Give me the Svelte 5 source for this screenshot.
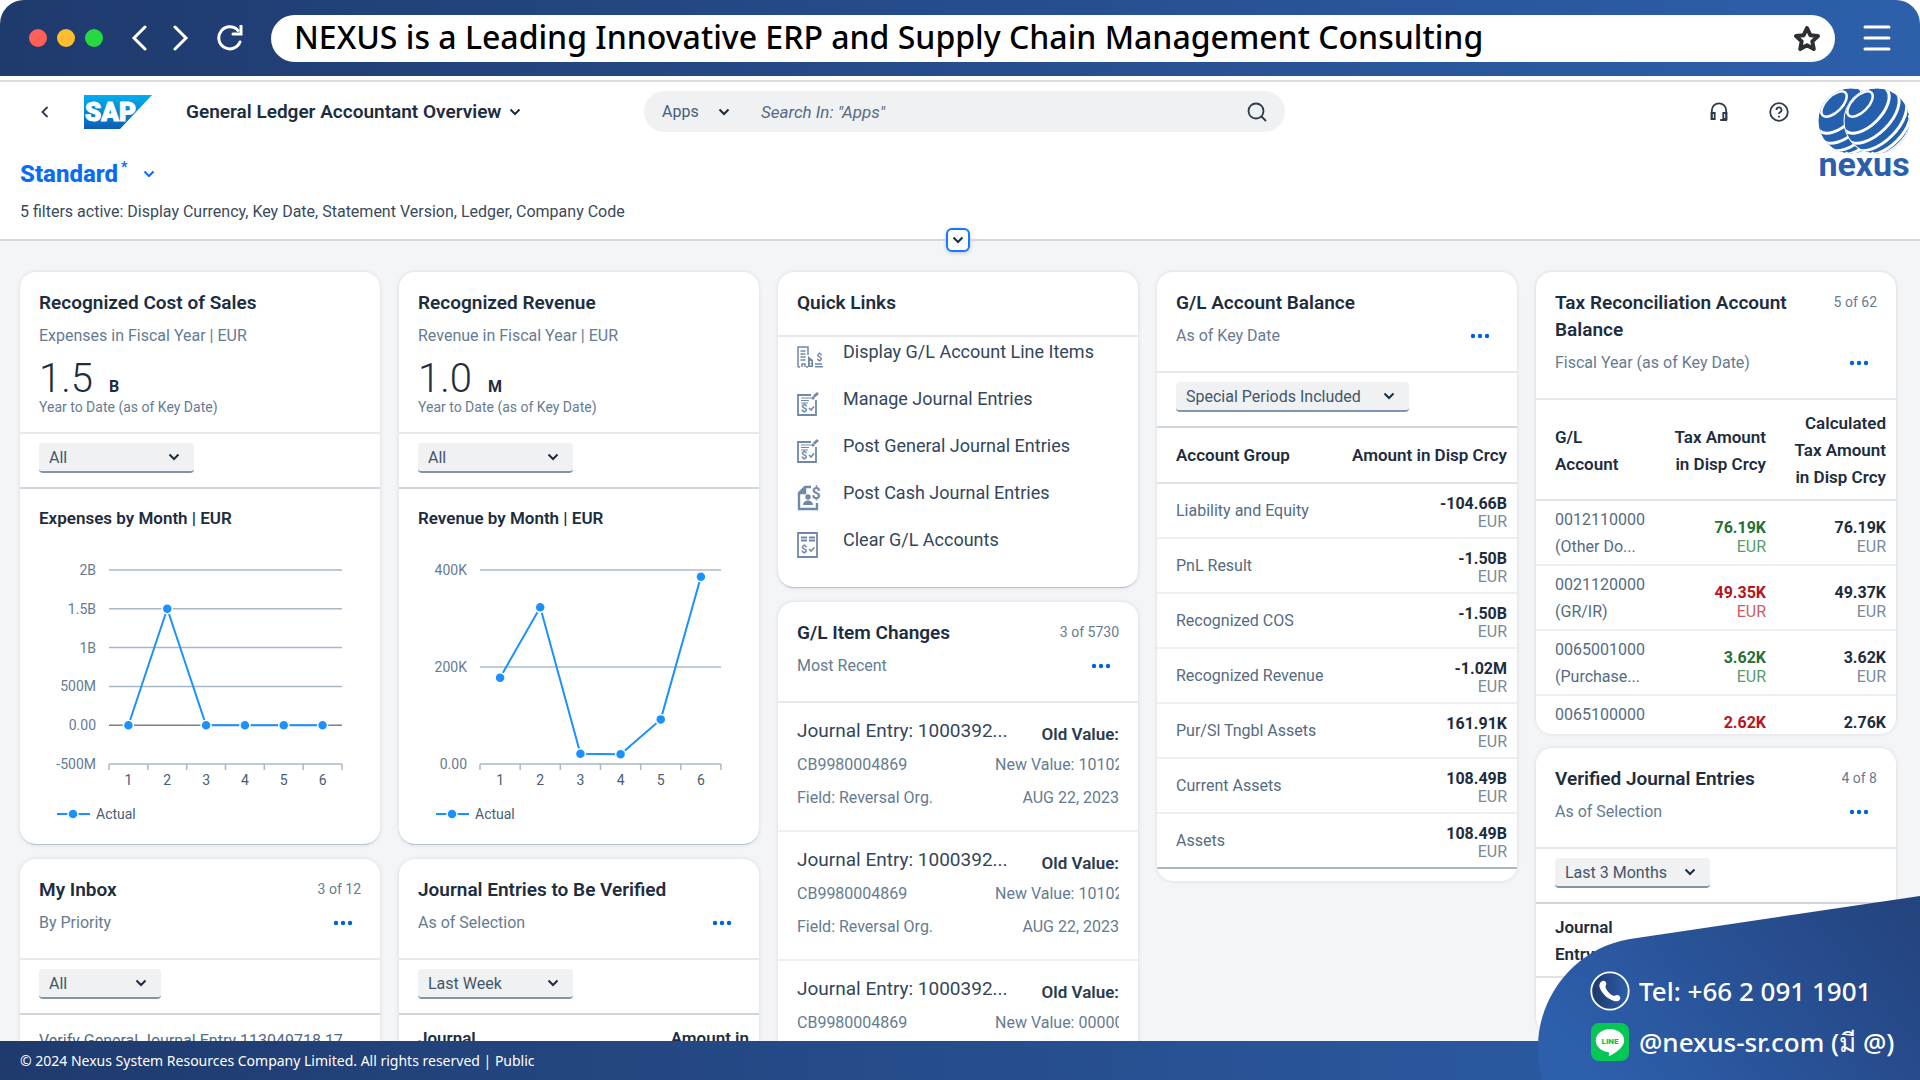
<script>
  const quickLinks = [
    { label: 'Display G/L Account Line Items', icon: 'building' },
    { label: 'Manage Journal Entries', icon: 'edit' },
    { label: 'Post General Journal Entries', icon: 'edit' },
    { label: 'Post Cash Journal Entries', icon: 'cash' },
    { label: 'Clear G/L Accounts', icon: 'clear' },
  ];

  const changes = [
    { entry: '1000392...', user: 'CB9980004869', value: '1010200', field: 'Reversal Org.', date: 'AUG 22, 2023' },
    { entry: '1000392...', user: 'CB9980004869', value: '1010200', field: 'Reversal Org.', date: 'AUG 22, 2023' },
    { entry: '1000392...', user: 'CB9980004869', value: '0000000', field: 'Reversal Org.', date: 'AUG 22, 2023' },
  ];

  const balances = [
    ['Liability and Equity', '-104.66B'],
    ['PnL Result', '-1.50B'],
    ['Recognized COS', '-1.50B'],
    ['Recognized Revenue', '-1.02M'],
    ['Pur/Sl Tngbl Assets', '161.91K'],
    ['Current Assets', '108.49B'],
    ['Assets', '108.49B'],
  ];

  const taxRows = [
    { account: '0012110000', name: '(Other Do...', amount: '76.19K', calc: '76.19K', good: true },
    { account: '0021120000', name: '(GR/IR)', amount: '49.35K', calc: '49.37K', good: false },
    { account: '0065001000', name: '(Purchase...', amount: '3.62K', calc: '3.62K', good: true },
    { account: '0065100000', name: '', amount: '2.62K', calc: '2.76K', good: false },
  ];

  const costChart = {
    left: 89, right: 322, top: 31, bottom: 225, min: -500, max: 2000,
    grid: [[2000, '2B'], [1500, '1.5B'], [1000, '1B'], [500, '500M'], [0, '0.00'], [-500, '-500M']],
    values: [0, 1500, 0, 0, 0, 0],
  };
  const revenueChart = {
    left: 81, right: 322, top: 31, bottom: 225, min: 0, max: 400,
    grid: [[400, '400K'], [200, '200K'], [0, '0.00']],
    values: [178, 323, 21, 20, 92, 386],
  };

  function yOf(c, v) {
    return c.bottom - ((v - c.min) / (c.max - c.min)) * (c.bottom - c.top);
  }

  function xOf(c, i) {
    const step = (c.right - c.left) / c.values.length;
    return c.left + step * (i + 0.5);
  }

  // latitude lines of the logo globes, pole pointing up
  const R = 33;
  const tilt = 0.6;
  const latitudes = [35, 15, -5, -24, -42].map((deg) => {
    const a = (deg * Math.PI) / 180;
    const rx = R * Math.cos(a) + 2;
    const cy = -R * Math.sin(a) * Math.cos(tilt);
    const ry = R * Math.cos(a) * Math.sin(tilt);
    return `M${-rx} ${cy}A${rx} ${ry} 0 0 0 ${rx} ${cy}`;
  });
</script>

{#snippet chevron()}
  <svg class="chevron" viewBox="0 0 12 8" width="12" height="8" aria-hidden="true">
    <path d="M1.5 1.5L6 6l4.500-4.500" />
  </svg>
{/snippet}

{#snippet more()}
  <button class="more" aria-label="More actions">
    <svg viewBox="0 0 20 6" width="20" height="6"><circle cx="3" cy="3" r="2.200" /><circle cx="10" cy="3" r="2.200" /><circle cx="17" cy="3" r="2.200" /></svg>
  </button>
{/snippet}

{#snippet filter(id, text, size)}
  <div class="filter">
    <div class="select {size}">
      <select {id} aria-label="Filter"><option>{text}</option></select>
      {@render chevron()}
    </div>
  </div>
{/snippet}

{#snippet lineChart(c, label)}
  <svg class="chart" viewBox="0 0 360 305" role="img" aria-label={label}>
    {#each c.grid as [v, text]}
      <line class:zero={v === 0 && c.min < 0} x1={c.left} x2={c.right} y1={yOf(c, v)} y2={yOf(c, v)} />
      <text class="axis" x={c.left - 13} y={yOf(c, v) + 5} text-anchor="end">{text}</text>
    {/each}
    {#each [0, 1, 2, 3, 4, 5, 6] as t}
      <line x1={xOf(c, t - 0.5)} x2={xOf(c, t - 0.5)} y1={c.bottom} y2={c.bottom + 6} />
    {/each}
    <polyline points={c.values.map((v, i) => `${xOf(c, i)},${yOf(c, v)}`).join(' ')} />
    {#each c.values as v, i}
      <circle cx={xOf(c, i)} cy={yOf(c, v)} r="5" />
      <text class="month" x={xOf(c, i)} y={c.bottom + 21} text-anchor="middle">{i + 1}</text>
    {/each}
    <polyline points="37,275 70,275" />
    <circle cx="53" cy="275" r="5" />
    <text class="month" x="76" y="280">Actual</text>
  </svg>
{/snippet}

{#snippet globe(x, id)}
  <g transform="translate({x} 33)">
    <circle r="33.500" fill="#fff" />
    <clipPath {id}><circle r="32.500" /></clipPath>
    <g clip-path="url(#{id})">
      <circle r="33" fill="#2560ae" />
      <g transform="rotate(-45)" fill="none" stroke="#fff" stroke-width="3">
        <ellipse cx="0" cy="-24" rx="16" ry="8" stroke-width="2.500" />
        {#each latitudes as d}<path {d} />{/each}
      </g>
    </g>
  </g>
{/snippet}

{#snippet linkIcon(kind)}
  <svg class="link-icon" viewBox="0 0 26 26" width="26" height="26" aria-hidden="true">
    {#if kind === 'building'}
      <path d="M1 23V3h10v8M1 23h2m6 0h2M5 23v-3h3v3M3.500 7h5M3.500 10h5M3.500 13h5M3.500 16h5" stroke-width="1.500" />
      <path d="M11 23V12l5 4v7z" class="solid" />
      <path d="M12.800 18h1.500M12.800 20.500h1.500" stroke="#fff" />
      <path d="M18 20h7M18 22.700h8" stroke-width="1.600" />
      <text x="19.500" y="17" font-size="10">$</text>
    {:else if kind === 'edit'}
      <path d="M14 4H1v20h18V9" />
      <path d="M4 7h10M4 9.500h8M4 12h7" stroke-width="1.200" />
      <path d="M15 8l2-2M17 5.500l4-3.500" stroke-width="2.800" />
      <path d="M12 17l2 2 3-3.500" stroke-width="1.600" />
      <text x="4" y="20.500" font-size="11">$</text>
    {:else if kind === 'cash'}
      <path d="M14 2H8L2 8v16h18v-6M8 2v6H2" stroke-width="2.400" />
      <path d="M8 2v6H2z" class="solid" />
      <circle cx="11" cy="12" r="2.700" class="solid" />
      <path d="M6 20c0-6 10-6 10 0z" class="solid" />
      <text x="14.500" y="13.500" font-size="16">$</text>
    {:else}
      <path d="M1 1h19v24H1z" />
      <path d="M4 5.500h6M12 5.500h6M4 8.500h6M12 8.500h6" stroke-width="1.800" />
      <path d="M12 17l2 2 3.500-3.500" stroke-width="1.600" />
      <text x="4" y="20.500" font-size="11">$</text>
    {/if}
  </svg>
{/snippet}

<div class="page">
  <header class="browser">
    <span class="dot red"></span>
    <span class="dot yellow"></span>
    <span class="dot green"></span>
    <button class="nav back" aria-label="Back">
      <svg viewBox="0 0 17 26" width="17" height="26"><path d="M14 2L3 13l11 11" /></svg>
    </button>
    <button class="nav" aria-label="Forward">
      <svg viewBox="0 0 17 26" width="17" height="26"><path d="M3 2l11 11L3 24" /></svg>
    </button>
    <button class="nav reload" aria-label="Reload">
      <svg viewBox="0 0 26 26" width="26" height="26"><path d="M23 17A11 11 0 1 1 21 5.500" /><path d="M24 1v8h-8" /></svg>
    </button>
    <div class="url">
      <input aria-label="Address" value="NEXUS is a Leading Innovative ERP and Supply Chain Management Consulting" />
      <button class="star" aria-label="Bookmark">
        <svg viewBox="0 0 28 27" width="28" height="27"><path d="M14 3l3.300 7.200 7.700.9-5.700 5.300 1.500 7.700L14 20.300l-6.800 3.800 1.500-7.700L3 11.100l7.700-.9z" /></svg>
      </button>
    </div>
    <button class="nav menu" aria-label="Menu">
      <svg viewBox="0 0 28 26" width="28" height="26"><path d="M2 2h24M2 13h24M2 24h24" /></svg>
    </button>
  </header>

  <div class="shell">
    <div class="shell-left">
      <button class="plain" aria-label="Previous page">
        <svg viewBox="0 0 8 12" width="8" height="12"><path d="M6.500 1L1.500 6l5 5" /></svg>
      </button>
      <svg class="sap" viewBox="0 0 68 34" width="68" height="34" role="img" aria-label="SAP">
        <defs>
          <linearGradient id="sapBlue" x1="0" y1="0" x2="0" y2="1">
            <stop offset="0" stop-color="#00aeef" /><stop offset="1" stop-color="#0a5fb4" />
          </linearGradient>
        </defs>
        <path d="M0 0h68L36 34H0z" fill="url(#sapBlue)" />
        <text x="1" y="26" font-size="26">SAP</text>
      </svg>
      <button class="app-title">General Ledger Accountant Overview {@render chevron()}</button>
    </div>
    <div class="search">
      <div class="scope">
        <select aria-label="Search scope"><option>Apps</option></select>
        {@render chevron()}
      </div>
      <input type="search" placeholder={'Search In: "Apps"'} aria-label="Search" />
      <button class="plain" aria-label="Search">
        <svg viewBox="0 0 20 20" width="20" height="20"><circle cx="9" cy="9" r="7.500" /><path d="M14.500 14.500L19 19" /></svg>
      </button>
    </div>
    <div class="shell-right">
      <button class="plain" aria-label="Support">
        <svg viewBox="0 0 18 20" width="18" height="20"><path d="M1.800 17.500V8.500a7.200 7.200 0 0 1 14.400 0V18h-6" /><path d="M1.500 11h3.200v6H1.500zM13.300 11h3.200v6h-3.200z" /></svg>
      </button>
      <button class="plain" aria-label="Help">
        <svg viewBox="0 0 20 20" width="20" height="20"><circle cx="10" cy="10" r="8.800" /><path d="M7.500 8a2.500 2.500 0 1 1 3.500 2.200c-.8.400-1 .8-1 1.800M10 13.800v1.600" /></svg>
      </button>
      <div class="brand">
        <svg viewBox="0 0 92 66" width="92" height="66" aria-hidden="true">
          {@render globe(33, 'globeLeft')}
          {@render globe(59, 'globeRight')}
        </svg>
        <span>nexus</span>
      </div>
    </div>
  </div>

  <div class="filters">
    <button class="variant">Standard<sup>*</sup> {@render chevron()}</button>
    <p>5 filters active: Display Currency, Key Date, Statement Version, Ledger, Company Code</p>
    <button class="expand" aria-label="Expand header">{@render chevron()}</button>
  </div>

  <main>
    <div class="column">
      <section class="card ruled">
        <div class="head kpi">
          <h2>Recognized Cost of Sales</h2>
          <p class="sub">Expenses in Fiscal Year | EUR</p>
          <p class="number">1.5 <b>B</b></p>
          <p class="note">Year to Date (as of Key Date)</p>
        </div>
        {@render filter('cost', 'All', 'medium')}
        <h3>Expenses by Month | EUR</h3>
        {@render lineChart(costChart, 'Expenses by month')}
      </section>
      <section class="card">
        <div class="head">
          <div class="row"><h2>My Inbox</h2><span class="count">3 of 12</span></div>
          <div class="row"><p class="sub">By Priority</p>{@render more()}</div>
        </div>
        {@render filter('inbox', 'All', 'small')}
        <p class="task">Verify General Journal Entry 113049718 17</p>
      </section>
    </div>

    <div class="column">
      <section class="card ruled">
        <div class="head kpi">
          <h2>Recognized Revenue</h2>
          <p class="sub">Revenue in Fiscal Year | EUR</p>
          <p class="number">1.0 <b>M</b></p>
          <p class="note">Year to Date (as of Key Date)</p>
        </div>
        {@render filter('revenue', 'All', 'medium')}
        <h3>Revenue by Month | EUR</h3>
        {@render lineChart(revenueChart, 'Revenue by month')}
      </section>
      <section class="card">
        <div class="head">
          <h2>Journal Entries to Be Verified</h2>
          <div class="row"><p class="sub">As of Selection</p>{@render more()}</div>
        </div>
        {@render filter('verify', 'Last Week', 'medium')}
        <table>
          <thead><tr><th>Journal</th><th>Amount in</th></tr></thead>
        </table>
      </section>
    </div>

    <div class="column">
      <section class="card ruled">
        <div class="head short"><h2>Quick Links</h2></div>
        <ul>
          {#each quickLinks as link}
            <li>{@render linkIcon(link.icon)}<a href="#top">{link.label}</a></li>
          {/each}
        </ul>
      </section>
      <section class="card">
        <div class="head">
          <div class="row"><h2>G/L Item Changes</h2><span class="count">3 of 5730</span></div>
          <div class="row"><p class="sub">Most Recent</p>{@render more()}</div>
        </div>
        {#each changes as c}
          <article>
            <div class="row"><span class="entry">Journal Entry: {c.entry}</span><b>Old Value:</b></div>
            <div class="row"><span>{c.user}</span><span class="cut">New Value: {c.value}</span></div>
            <div class="row"><span>Field: {c.field}</span><span>{c.date}</span></div>
          </article>
        {/each}
      </section>
    </div>

    <div class="column">
      <section class="card balance">
        <div class="head">
          <h2>G/L Account Balance</h2>
          <div class="row"><p class="sub">As of Key Date</p>{@render more()}</div>
        </div>
        {@render filter('periods', 'Special Periods Included', 'large')}
        <table>
          <thead><tr><th>Account Group</th><th>Amount in Disp Crcy</th></tr></thead>
          <tbody>
            {#each balances as [name, amount]}
              <tr><td>{name}</td><td><b>{amount}</b><small>EUR</small></td></tr>
            {/each}
          </tbody>
        </table>
      </section>
    </div>

    <div class="column">
      <section class="card tax">
        <div class="head">
          <div class="row"><h2>Tax Reconciliation Account Balance</h2><span class="count">5 of 62</span></div>
          <div class="row"><p class="sub">Fiscal Year (as of Key Date)</p>{@render more()}</div>
        </div>
        <table>
          <thead><tr><th>G/L<br />Account</th><th>Tax Amount<br />in Disp Crcy</th><th>Calculated<br />Tax Amount<br />in Disp Crcy</th></tr></thead>
          <tbody>
            {#each taxRows as r}
              <tr>
                <td>{r.account}<br />{r.name}&nbsp;</td>
                <td class={r.good ? 'good' : 'bad'}><b>{r.amount}</b><small>EUR</small></td>
                <td><b>{r.calc}</b><small>EUR</small></td>
              </tr>
            {/each}
          </tbody>
        </table>
      </section>
      <section class="card">
        <div class="head">
          <div class="row"><h2>Verified Journal Entries</h2><span class="count">4 of 8</span></div>
          <div class="row"><p class="sub">As of Selection</p>{@render more()}</div>
        </div>
        {@render filter('verified', 'Last 3 Months', 'medium')}
        <table>
          <thead><tr><th>Journal<br />Entry</th></tr></thead>
          <tbody><tr><td></td></tr></tbody>
        </table>
      </section>
    </div>
  </main>

  <footer>© 2024 Nexus System Resources Company Limited. All rights reserved | Public</footer>

  <aside class="contact">
    <svg class="blob" viewBox="0 0 382 184" preserveAspectRatio="none" aria-hidden="true">
      <defs>
        <linearGradient id="blobBlue" x1="0" y1="0.6" x2="1" y2="0.200">
          <stop offset="0" stop-color="#2d5fac" /><stop offset="1" stop-color="#24447f" />
        </linearGradient>
      </defs>
      <path d="M382 0L92 43C36 52 0 102 0 150Q0 168 4 184H382z" fill="url(#blobBlue)" />
    </svg>
    <div class="line">
      <svg viewBox="0 0 40 40" width="40" height="40" aria-hidden="true">
        <defs>
          <linearGradient id="phoneBlue"><stop offset="0" stop-color="#1f3768" /><stop offset="1" stop-color="#2d5fac" /></linearGradient>
        </defs>
        <circle cx="20" cy="20" r="18.700" fill="url(#phoneBlue)" stroke="#fff" stroke-width="1.800" />
        <path d="M11.500 10.500c2-1.500 4.500-.3 4.800 2 .2 1.700-1.300 2.400-.7 4 1.200 3.300 4.100 6.500 7.500 8.200 1.600.7 2.500-1 4.200-.8 2.500.3 3.900 2.900 2.400 4.800-1.200 1.600-3.300 2-5.600 1.300-6.500-2-12.400-7.300-14.500-13.700-.7-2.200.3-4.600 1.900-5.800z" fill="#fff" />
      </svg>
      <a href="tel:+6620911901">Tel: +66 2 091 1901</a>
    </div>
    <div class="line">
      <svg viewBox="0 0 40 40" width="40" height="40" aria-hidden="true">
        <rect x="1" y="1" width="38" height="38" rx="8" fill="#06c755" />
        <path d="M20 7C12 7 5.800 12.200 5.800 18.600c0 5.700 5 10.500 11.900 11.400 1.700.3 1.500 1 1.100 3.300-.1.700.1 1 .9.600 3.600-1.600 14.500-8 14.500-15.300C34.200 12.200 28 7 20 7z" fill="#fff" />
        <text x="20" y="21.500" text-anchor="middle" font-size="8">LINE</text>
      </svg>
      <a href="#line">@nexus-sr.com (มี @)</a>
    </div>
  </aside>
</div>

<style>
  :global(body) {
    background: #fff;
  }

  .page {
    position: relative;
    display: flex;
    flex-direction: column;
    height: 100vh;
    overflow: hidden;
    background: #fff;
    color: #1d2d3e;
    font-family: Roboto, "Noto Sans", sans-serif;
    font-size: 16px;
  }

  h2, h3, p, ul {
    margin: 0;
    padding: 0;
  }

  button, input, select {
    padding: 0;
    border: 0;
    background: none;
    color: inherit;
    font: inherit;
    outline: none;
  }

  select {
    appearance: none;
    width: 100%;
  }

  a {
    color: inherit;
    text-decoration: none;
  }

  svg {
    display: block;
    flex: none;
  }

  .chevron {
    fill: none;
    stroke: #1d2d3e;
    stroke-width: 2;
  }

  .browser {
    flex: none;
    display: flex;
    align-items: center;
    gap: 10px;
    height: 76px;
    padding: 0 29px;
    box-sizing: border-box;
    border-radius: 24px 24px 0 0;
    background: linear-gradient(90deg, #1f3a6d, #2d60ab);
  }

  .dot {
    width: 18px;
    height: 18px;
    border-radius: 50%;
  }

  .red { background: #ff5f57; }
  .yellow { background: #febc2e; }
  .green { background: #28d840; }

  .nav svg {
    fill: none;
    stroke: #fff;
    stroke-width: 3;
    stroke-linecap: round;
  }

  .back {
    margin: 0 14px 0 18px;
  }

  .reload {
    margin: 0 18px;
  }

  .url {
    flex: 1;
    display: flex;
    align-items: center;
    height: 47px;
    padding: 0 14px 0 23px;
    border-radius: 24px;
    background: #fff;
  }

  .url input {
    flex: 1;
    height: 47px;
    padding-bottom: 3px;
    box-sizing: border-box;
    color: #000;
    font-family: "Noto Sans", sans-serif;
    font-size: 32px;
    font-weight: 500;
  }

  .star svg {
    fill: none;
    stroke: #2f2f33;
    stroke-width: 4;
    stroke-linejoin: round;
  }

  .menu {
    margin-left: 18px;
  }

  .shell {
    flex: none;
    display: grid;
    grid-template-columns: 603fr 641fr 625fr;
    align-items: start;
    height: 64px;
    margin-top: 4px;
    padding: 9px 10px 0 41px;
    box-sizing: border-box;
    border-top: 2px solid #d9dbdd;
  }

  .shell-left, .shell-right {
    display: flex;
    align-items: center;
    height: 41px;
  }

  .plain svg {
    fill: none;
    stroke: #2b3b4c;
    stroke-width: 1.800;
  }

  .sap {
    margin: 0 34px 0 35px;
  }

  .sap text {
    fill: #fff;
    stroke: #fff;
    font-weight: 900;
  }

  .app-title {
    display: flex;
    align-items: center;
    gap: 8px;
    font-size: 19px;
    font-weight: 600;
  }

  .search {
    display: flex;
    align-items: center;
    height: 41px;
    padding: 0 18px;
    box-sizing: border-box;
    border-radius: 21px;
    background: #eff1f2;
    color: #475e75;
  }

  .scope {
    display: flex;
    align-items: center;
    width: 68px;
  }

  .search input {
    flex: 1;
    margin-left: 31px;
    font-size: 17px;
    font-style: italic;
  }

  .search input::placeholder {
    color: #556b82;
  }

  .shell-right {
    justify-content: flex-end;
    gap: 41px;
  }

  .brand {
    display: flex;
    flex-direction: column;
    align-items: center;
    align-self: flex-start;
    margin: -3px 0 0 -12px;
    color: #2b5fad;
    font-size: 34px;
    font-weight: 700;
    line-height: 20px;
  }

  .filters {
    position: relative;
    flex: none;
    height: 97px;
    padding: 16px 20px 0;
    box-sizing: border-box;
    border-bottom: 2px solid #d5d8db;
    color: #3b4a5b;
    font-size: 16px;
  }

  .variant {
    display: flex;
    align-items: center;
    height: 28px;
    margin-bottom: 12px;
    color: #0a6cf5;
    font-size: 24px;
    font-weight: 800;
  }

  .variant sup {
    align-self: flex-start;
    margin: 0 16px 0 3px;
    font-size: 14px;
    line-height: 14px;
  }

  .variant .chevron, .variant :global(.chevron) {
    stroke: #0a6cf5;
  }

  .filters p {
    line-height: 24px;
  }

  .expand {
    position: absolute;
    left: calc(50% - 14px);
    bottom: -13px;
    display: flex;
    align-items: center;
    justify-content: center;
    width: 24px;
    height: 24px;
    border: 2px solid #1a78f8;
    border-radius: 6px;
    background: #fff;
    box-shadow: 0 1px 4px #b9c6d6;
  }

  main {
    flex: 1;
    display: grid;
    grid-template-columns: repeat(5, minmax(0, 1fr));
    gap: 19px;
    align-items: start;
    min-height: 0;
    padding: 31px 24px 0 20px;
    overflow: hidden;
    background: #f4f5f7;
  }

  .column {
    display: flex;
    flex-direction: column;
    gap: 14px;
  }

  .card {
    border-radius: 16px;
    background: #fff;
    box-shadow: 0 0 4px #d5dae0;
    overflow: hidden;
  }

  .ruled {
    border-bottom: 1px solid #b9c3cd;
  }

  .head {
    padding: 17px 19px 23px;
    border-bottom: 2px solid #e6e8ea;
  }

  .kpi {
    padding-bottom: 15px;
  }

  .short {
    padding-bottom: 19px;
  }

  .row {
    display: flex;
    justify-content: space-between;
  }

  h2 {
    font-size: 19px;
    font-weight: 600;
    line-height: 27px;
  }

  .sub {
    margin-top: 8px;
    color: #667b91;
    line-height: 24px;
  }

  .count {
    flex: none;
    color: #667b91;
    font-size: 14px;
    line-height: 26px;
  }

  .more {
    margin: 8px 8px 0 0;
  }

  .more svg {
    fill: #0064d9;
  }

  .number {
    display: flex;
    align-items: baseline;
    gap: 16px;
    height: 36px;
    margin-top: 13px;
    font-size: 40px;
    font-weight: 300;
    line-height: 36px;
  }

  .number b {
    font-size: 16px;
    font-weight: 700;
  }

  .note {
    color: #667b91;
    font-size: 14px;
    line-height: 20px;
  }

  .filter {
    padding: 9px 19px 14px;
    border-bottom: 2px solid #cfd5db;
  }

  .select {
    display: flex;
    align-items: center;
    height: 30px;
    padding: 0 14px 0 10px;
    box-sizing: border-box;
    border-bottom: 2px solid #8396a9;
    border-radius: 4px;
    background: #eff1f2;
    color: #43566a;
  }

  .small { width: 122px; }
  .medium { width: 155px; }
  .large { width: 233px; }

  h3 {
    padding: 17px 19px 9px;
    font-size: 17px;
    font-weight: 600;
    line-height: 24px;
  }

  .chart {
    width: 100%;
  }

  .chart line {
    stroke: #a9b8c9;
    stroke-width: 1.500;
  }

  .chart .zero {
    stroke: #7b7f86;
  }

  .chart polyline {
    fill: none;
    stroke: #1b90ff;
    stroke-width: 2;
  }

  .chart circle {
    fill: #1b90ff;
    stroke: #fff;
    stroke-width: 1.500;
  }

  .chart text {
    font-size: 14px;
    fill: #475e75;
  }

  .chart .axis {
    fill: #667b91;
  }

  .task {
    padding: 13px 19px;
    color: #556b82;
    line-height: 26px;
    white-space: nowrap;
  }

  ul {
    padding-bottom: 15px;
    list-style: none;
  }

  li {
    display: flex;
    gap: 20px;
    height: 47px;
    padding: 0 19px;
    color: #33465a;
    font-size: 18px;
    line-height: 30px;
  }

  .link-icon {
    margin-top: 7px;
    fill: none;
    stroke: #7089a8;
    stroke-width: 1.800;
  }

  .link-icon .solid, .link-icon text {
    fill: #7089a8;
    stroke: none;
    font-weight: 700;
  }

  article {
    display: flex;
    flex-direction: column;
    gap: 9px;
    padding: 15px 19px 20px;
    border-bottom: 2px solid #eeeff1;
    color: #667b91;
    line-height: 24px;
  }

  .entry {
    color: #33465a;
    font-size: 19px;
    line-height: 26px;
  }

  article b {
    height: 26px;
    color: #2b3b4c;
    font-size: 17px;
    font-weight: 600;
    line-height: 32px;
  }

  .cut {
    width: 124px;
    overflow: hidden;
    white-space: nowrap;
  }

  table {
    width: 100%;
    border-collapse: collapse;
  }

  th, td {
    padding: 0 10px 0 19px;
    border-bottom: 2px solid #eeeff1;
    text-align: left;
    vertical-align: middle;
  }

  th {
    padding-top: 10px;
    padding-bottom: 8px;
    border-bottom-color: #e0e3e6;
    font-size: 17px;
    font-weight: 600;
    line-height: 27px;
    white-space: nowrap;
  }

  th + th, td + td {
    padding-left: 0;
    text-align: right;
  }

  td {
    height: 53px;
    color: #556b82;
  }

  td b, td small {
    display: block;
    color: #1d2d3e;
    font-size: 16px;
    font-weight: 700;
    line-height: 18px;
  }

  td b {
    padding-top: 5px;
  }

  td small {
    color: #7b8a9a;
    font-weight: 400;
  }

  .balance {
    padding-bottom: 12px;
  }

  .balance th {
    padding: 14px 10px 13px 19px;
  }

  .balance th + th {
    padding-left: 0;
  }

  .balance tr:last-child td {
    border-bottom-color: #a9b6c3;
  }

  .tax {
    height: 462px;
  }

  .tax table {
    table-layout: fixed;
  }

  .tax td {
    height: 63px;
    line-height: 27px;
  }

  .tax td b, .tax td small {
    line-height: 19px;
  }

  .tax td b {
    padding-top: 9px;
  }

  td.good b { color: #256f3a; }
  td.good small { color: #5a9a6c; }
  td.bad b { color: #b8141c; }
  td.bad small { color: #d25a60; }

  footer {
    flex: none;
    padding: 0 20px;
    background: linear-gradient(90deg, #1f3a6d, #2d60ab);
    color: #fff;
    font-family: "Noto Sans", sans-serif;
    font-size: 14px;
    line-height: 39px;
  }

  .contact {
    position: absolute;
    right: 0;
    bottom: 0;
    display: flex;
    flex-direction: column;
    gap: 11px;
    width: 382px;
    height: 184px;
    padding: 75px 0 0 52px;
    box-sizing: border-box;
    color: #fff;
    font-family: "Noto Sans", sans-serif;
    font-size: 26px;
    font-weight: 500;
  }

  .blob {
    position: absolute;
    inset: 0;
    width: 100%;
    height: 100%;
  }

  .line {
    position: relative;
    display: flex;
    align-items: center;
    gap: 9px;
    height: 40px;
    white-space: nowrap;
  }

  .line text {
    fill: #06c755;
    font-family: Roboto, sans-serif;
    font-weight: 900;
  }
</style>
